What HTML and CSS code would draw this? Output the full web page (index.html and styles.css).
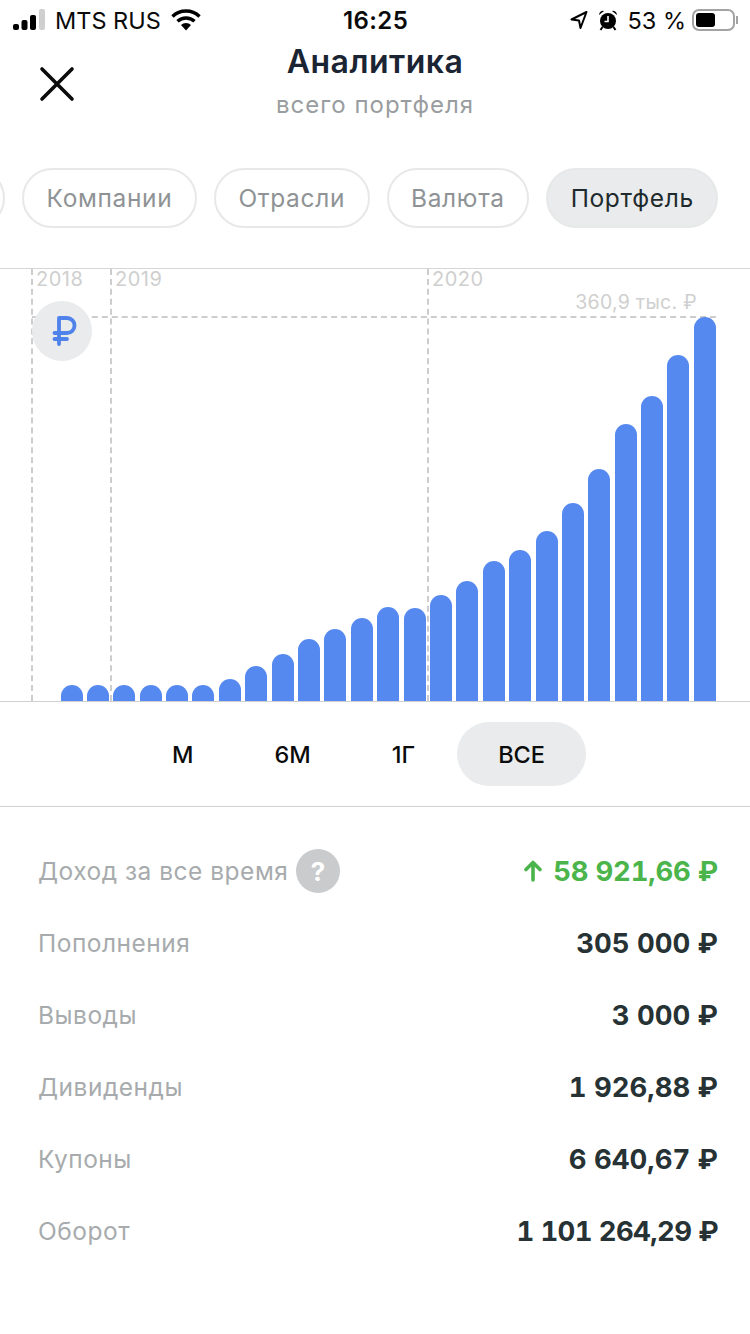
FILE: index.html
```html
<!DOCTYPE html>
<html lang="ru">
<head>
<meta charset="utf-8">
<title>Аналитика</title>
<link rel="stylesheet" href="styles.css">
</head>
<body>
<div class="page">
  <div class="status">
    <div class="status-side">
      <svg class="signal" width="36" height="22" viewBox="0 0 36 22"><rect x="0" y="15" width="6" height="6" rx="2" fill="#000"/><rect x="8.500" y="11" width="6" height="10" rx="2" fill="#000"/><rect x="17" y="6" width="6" height="15" rx="2" fill="#000"/><rect x="26" y="0" width="6" height="21" rx="2" fill="#cfcfcf"/></svg>
      <span class="carrier">MTS RUS</span>
      <svg class="wifi" width="30" height="22" viewBox="0 0 30 22"><path d="M1.5 7.5a19.5 19.5 0 0 1 27 0" fill="none" stroke="#000" stroke-width="3.4"/><path d="M6.5 12.3a12.5 12.5 0 0 1 17 0" fill="none" stroke="#000" stroke-width="3.4"/><path d="M10 16a7 7 0 0 1 10 0l-5 5.500z" fill="#000"/></svg>
    </div>
    <div class="time">16:25</div>
    <div class="status-side status-right">
      <svg class="loc" width="18" height="20" viewBox="0 0 18 20"><path d="M16.500 2 1.500 9.500l7.500 1 1.500 7.500z" fill="none" stroke="#000" stroke-width="2" stroke-linejoin="round"/></svg>
      <svg class="alarm" width="20" height="22" viewBox="0 0 20 22"><circle cx="10" cy="12" r="8" fill="#000"/><path d="M1 6a4 4 0 0 1 5-4zM19 6a4 4 0 0 0-5-4z" fill="#000"/><path d="M10 7v5.500H6.500" fill="none" stroke="#fff" stroke-width="1.600"/><path d="M4.500 18l-2 3M15.500 18l2 3" stroke="#000" stroke-width="2"/></svg>
      <span class="pct">53 %</span>
      <div class="battery"><div class="battery-fill"></div></div>
      <div class="battery-cap"></div>
    </div>
  </div>

  <header class="head">
    <svg class="close" width="36" height="36" viewBox="0 0 36 36"><path d="M3 3 33 33M33 3 3 33" fill="none" stroke="#0b0b0b" stroke-width="3.600" stroke-linecap="round"/></svg>
    <h1 class="title">Аналитика</h1>
    <div class="subtitle">всего портфеля</div>
  </header>

  <nav class="tabs">
    <span class="chip chip-cut"></span>
    <span class="chip">Компании</span>
    <span class="chip">Отрасли</span>
    <span class="chip">Валюта</span>
    <span class="chip chip-on">Портфель</span>
  </nav>

  <section class="chart">
    <div class="vline vline-18"><span class="year">2018</span></div>
    <div class="vline vline-19"><span class="year">2019</span></div>
    <div class="vline vline-20"><span class="year">2020</span></div>
    <div class="hline"></div>
    <div class="maxval">360,9 тыс. ₽</div>
    <div class="cur"><svg width="60" height="60" viewBox="0 0 60 60"><path d="M27 43V17h8a7.500 7.500 0 0 1 0 15H22.500M22.500 38H35" fill="none" stroke="#4f82ea" stroke-width="3.800" stroke-linecap="round" stroke-linejoin="round"/></svg></div>
    <div class="bars">
      <i class="bar" style="height:16px"></i><i class="bar" style="height:16px"></i><i class="bar" style="height:16px"></i><i class="bar" style="height:16px"></i><i class="bar" style="height:16px"></i><i class="bar" style="height:16px"></i><i class="bar" style="height:22px"></i><i class="bar" style="height:35px"></i><i class="bar" style="height:47px"></i><i class="bar" style="height:62px"></i><i class="bar" style="height:72px"></i><i class="bar" style="height:83px"></i><i class="bar" style="height:94px"></i><i class="bar" style="height:93px"></i><i class="bar" style="height:106px"></i><i class="bar" style="height:120px"></i><i class="bar" style="height:140px"></i><i class="bar" style="height:151px"></i><i class="bar" style="height:170px"></i><i class="bar" style="height:198px"></i><i class="bar" style="height:232px"></i><i class="bar" style="height:277px"></i><i class="bar" style="height:305px"></i><i class="bar" style="height:346px"></i><i class="bar" style="height:384px"></i>
    </div>
  </section>

  <div class="periods">
    <span class="period">М</span>
    <span class="period">6М</span>
    <span class="period">1Г</span>
    <span class="period period-on">ВСЕ</span>
  </div>

  <section class="stats">
    <div class="row"><span class="label">Доход за все время<b class="help">?</b></span><span class="val val-up"><svg class="up" width="18" height="22" viewBox="0 0 18 22"><path d="M9 20V3M2 9.500 9 2.500l7 7" fill="none" stroke="#4bb54b" stroke-width="3.600" stroke-linecap="round" stroke-linejoin="round"/></svg>58 921,66 ₽</span></div>
    <div class="row"><span class="label">Пополнения</span><span class="val">305 000 ₽</span></div>
    <div class="row"><span class="label">Выводы</span><span class="val">3 000 ₽</span></div>
    <div class="row"><span class="label">Дивиденды</span><span class="val">1 926,88 ₽</span></div>
    <div class="row"><span class="label">Купоны</span><span class="val">6 640,67 ₽</span></div>
    <div class="row"><span class="label">Оборот</span><span class="val val-long">1 101 264,29 ₽</span></div>
  </section>
</div>
</body>
</html>
```

FILE: styles.css
```css
* { box-sizing: border-box; }
html, body { margin: 0; padding: 0; background: #fff; }
body { font-family: Inter, "Noto Sans", sans-serif; }
.page { width: 750px; height: 1334px; overflow: hidden; }

.status { height: 40px; display: flex; align-items: center; justify-content: space-between; padding: 0 13px; position: relative; color: #0a0a0a; }
.status-side { display: flex; align-items: center; }
.status-right { gap: 0; }
.signal { margin-right: 6px; }
.carrier { font-size: 23.500px; }
.wifi { margin-left: 10px; }
.time { position: absolute; left: 343px; font-size: 24px; font-weight: 600; letter-spacing: 0.4px; }
.loc { margin-right: 10px; }
.alarm { margin-right: 10px; }
.pct { font-size: 23.500px; margin-right: 6px; }
.battery { width: 43px; height: 22px; border: 2px solid #a3a3a3; border-radius: 7px; padding: 2px; }
.battery-fill { width: 19px; height: 14px; background: #000; border-radius: 3px; }
.battery-cap { width: 2px; height: 8px; background: #a3a3a3; margin-left: 1px; margin-right: -1px; }

.head { height: 128px; position: relative; text-align: center; }
.close { position: absolute; left: 39px; top: 26px; }
.title { margin: 0; padding-top: 3px; font-size: 32px; line-height: 38px; font-weight: 600; letter-spacing: 0.5px; color: #1b2432; }
.subtitle { margin-top: 9px; font-size: 24px; line-height: 30px; letter-spacing: 1px; color: #9a9da0; }

.tabs { height: 100px; display: flex; gap: 17px; align-items: flex-start; margin-left: -114px; white-space: nowrap; }
.chip { height: 60px; padding: 0 22.500px; display: flex; align-items: center; border: 2px solid #e7e8e8; border-radius: 30px; font-size: 24.500px; letter-spacing: 0.65px; color: #8f9395; }
.chip-cut { width: 119px; }
.chip-on { background: #e9ebec; color: #1f2a2c; }

.chart { height: 434px; position: relative; border-top: 1px solid #d6d6d6; border-bottom: 1px solid #d0d0d0; }
.vline { position: absolute; top: 0; bottom: 0; border-left: 2px dashed #cdcdcd; }
.vline-18 { left: 31px; }
.vline-19 { left: 110px; }
.vline-20 { left: 427px; }
.year { position: absolute; left: 3px; top: 0; font-size: 20px; line-height: 21px; letter-spacing: 0.5px; color: #cfcfcf; }
.hline { position: absolute; left: 32px; right: 34px; top: 47px; border-top: 2px dashed #cdcdcd; }
.maxval { position: absolute; right: 53px; top: 21px; font-size: 19.500px; line-height: 24px; letter-spacing: 0.25px; color: #cfcfcf; }
.cur { position: absolute; left: 32px; top: 32px; width: 60px; height: 60px; border-radius: 50%; background: #e9ebec; }
.cur svg { display: block; }
.bars { position: absolute; left: 60.500px; bottom: 0; display: flex; align-items: flex-end; gap: 4.400px; }
.bar { display: block; width: 22px; background: #5589f0; border-radius: 11px 11px 0 0; }

.periods { height: 105px; display: flex; justify-content: center; align-items: flex-start; padding: 20px 32px 0 0; border-bottom: 1px solid #d0d0d0; }
.period { height: 64px; padding: 0 41px 0 40px; display: flex; align-items: center; font-size: 23.500px; font-weight: 500; color: #0b0b0b; border-radius: 32px; }
.period-on { background: #e9ebec; padding: 0 41px; margin-left: 1px; }

.stats { padding: 28px 32px 0 38px; }
.row { height: 72px; display: flex; align-items: center; justify-content: space-between; }
.label { display: flex; align-items: center; font-size: 24.500px; letter-spacing: 0.5px; color: #a7abad; }
.help { width: 44px; height: 44px; margin-left: 8px; border-radius: 50%; background: #c9cbcd; color: #fff; font-size: 26px; font-weight: 700; display: flex; align-items: center; justify-content: center; }
.val { display: flex; align-items: center; font-size: 27.500px; font-weight: 700; color: #263234; font-variant-numeric: tabular-nums; }
.val-up { color: #4bb54b; letter-spacing: -0.2px; }
.val-long { letter-spacing: -0.6px; }
.up { margin-right: 11px; }
```
